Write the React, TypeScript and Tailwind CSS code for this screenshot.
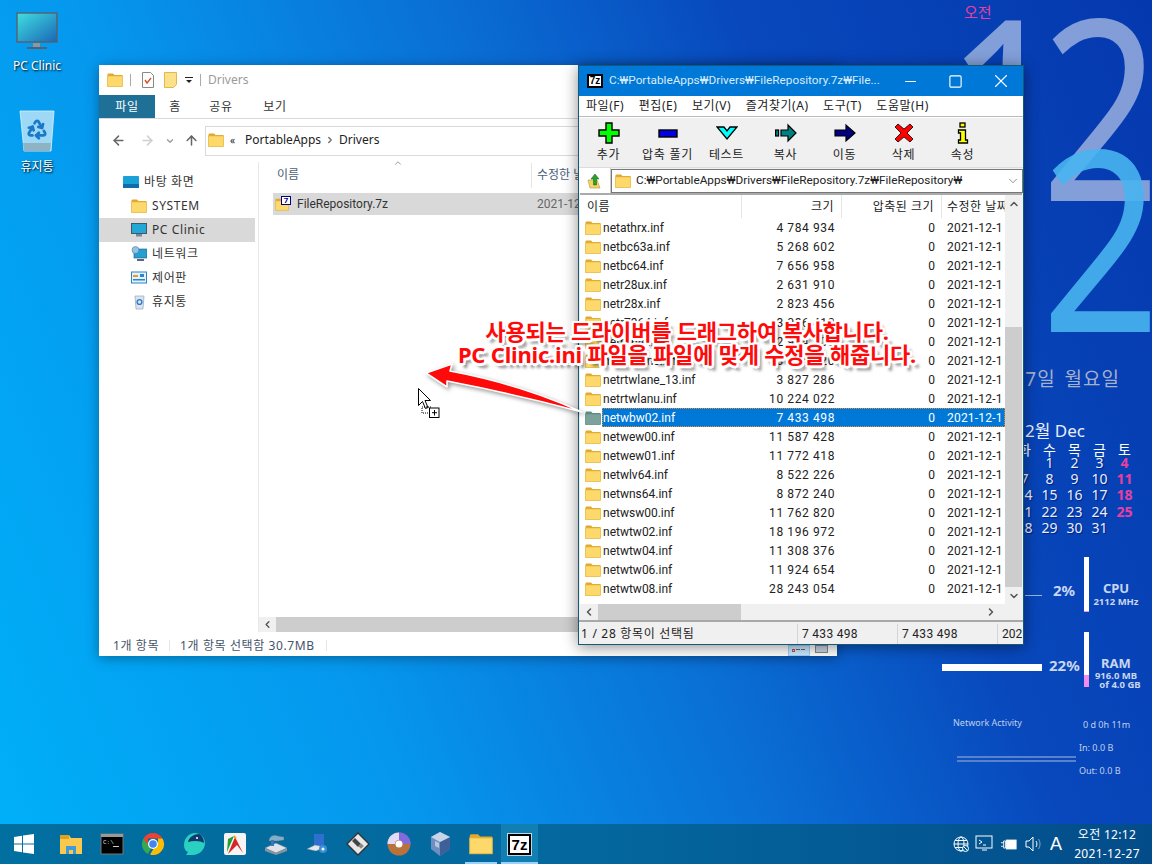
import React from "react";
import { ArrowLeft, ArrowRight, ArrowUp, ChevronDown, ChevronRight, ChevronLeft, ChevronUp, Minus, X, Square, Recycle } from "lucide-react";

const Folder = ({ className = "w-4 h-4", muted = false }: { className?: string; muted?: boolean }) => (
  <svg viewBox="0 0 16 14" className={className}>
    <path d="M0.5 1.5 Q0.5 .5 1.5 .5 H6 L7.5 2 H15.5 V13.5 H0.5Z" fill={muted ? "#5f8a86" : "#e0a82e"} />
    <rect x="0.5" y="3" width="15" height="10.5" fill={muted ? "#7da29c" : "#fdd96b"} stroke={muted ? "#5f8a86" : "#e6b63f"} strokeWidth=".6" />
  </svg>
);

const SevenZ = ({ className, text }: { className: string; text: string }) => (
  <div className={`flex items-center justify-center bg-white border-2 border-black font-['Liberation_Sans',sans-serif] font-bold text-black leading-none ${className} ${text}`}>7z</div>
);

const rows: [string, string][] = [
  ["netathrx.inf", "4 784 934"], ["netbc63a.inf", "5 268 602"], ["netbc64.inf", "7 656 958"], ["netr28ux.inf", "2 631 910"], ["netr28x.inf", "2 823 456"],
  ["netr7364.inf", "3 086 412"], ["netrtl64.inf", "2 964 108"], ["netrtwlane.inf", "3 614 720"], ["netrtwlane_13.inf", "3 827 286"], ["netrtwlanu.inf", "10 224 022"],
  ["netwbw02.inf", "7 433 498"], ["netwew00.inf", "11 587 428"], ["netwew01.inf", "11 772 418"], ["netwlv64.inf", "8 522 226"], ["netwns64.inf", "8 872 240"],
  ["netwsw00.inf", "11 762 820"], ["netwtw02.inf", "18 196 972"], ["netwtw04.inf", "11 308 376"], ["netwtw06.inf", "11 924 654"], ["netwtw08.inf", "28 243 054"],
];

const tools: { label: string; icon: React.ReactNode }[] = [
  { label: "추가", icon: <path d="M8 1h6v7h7v6h-7v7H8v-7H1V8h7z" fill="#00ff00" stroke="#000" strokeWidth="1.4" /> },
  { label: "압축 풀기", icon: <rect x="2" y="8" width="18" height="7" fill="#0000e0" stroke="#000" strokeWidth="1.4" /> },
  { label: "테스트", icon: <path d="M1 5h7l3 4 3-4h7L11 17z" fill="#00ffff" stroke="#000" strokeWidth="1.3" /> },
  { label: "복사", icon: <g stroke="#000" strokeWidth="1.2" fill="#008080"><rect x="0.6" y="8" width="3" height="6" /><path d="M6 8h7V3l8 8-8 8v-5H6z" /></g> },
  { label: "이동", icon: <path d="M1 8h11V3l9 8-9 8v-5H1z" fill="#000080" stroke="#000" strokeWidth="1.2" /> },
  { label: "삭제", icon: <path d="M5 2l6 5 6-5 3 3-6 6 6 6-3 3-6-5-6 5-3-3 6-6-6-6z" fill="#ff0000" stroke="#000" strokeWidth=".8" /> },
  { label: "속성", icon: <g fill="#ffff00" stroke="#000" strokeWidth="1.3"><rect x="8" y="1" width="5" height="4" /><path d="M6.5 8h7v10h2v3h-9v-3h2v-7h-2z" /></g> },
];

const days = ["일", "월", "화", "수", "목", "금", "토"];
const dates = ["", "", "", "1", "2", "3", "4", "5", "6", "7", "8", "9", "10", "11", "12", "13", "14", "15", "16", "17", "18", "19", "20", "21", "22", "23", "24", "25", "26", "27", "28", "29", "30", "31", ""];

const side: { label: string; active?: boolean; indent: string; icon: React.ReactNode }[] = [
  { label: "바탕 화면", indent: "pl-[24px]", icon: <svg viewBox="0 0 16 12" className="w-4 h-3"><rect width="16" height="12" rx="1" fill="#1aa2d8" /><rect y="8" width="16" height="4" fill="#0e6fa8" /></svg> },
  { label: "SYSTEM", indent: "pl-[32px]", icon: <Folder /> },
  { label: "PC Clinic", active: true, indent: "pl-[32px]", icon: <svg viewBox="0 0 16 14" className="w-4 h-4"><rect x=".5" y=".5" width="15" height="10" fill="#22a7d6" stroke="#456" /><rect x="5" y="11" width="6" height="2.5" fill="#789" /></svg> },
  { label: "네트워크", indent: "pl-[32px]", icon: <svg viewBox="0 0 16 16" className="w-4 h-4"><rect x="3" y="3" width="13" height="9" fill="#22a0d0" stroke="#357" strokeWidth=".6" /><rect x="6" y="13" width="7" height="2" fill="#568" /><circle cx="4.5" cy="4" r="3.5" fill="#8fc4e8" stroke="#468" strokeWidth=".5" /></svg> },
  { label: "제어판", indent: "pl-[32px]", icon: <svg viewBox="0 0 16 14" className="w-4 h-4"><rect x=".5" y="1" width="15" height="11" fill="#e4f1fb" stroke="#2a86c8" /><rect x="2" y="4" width="5" height="2" fill="#e79a2a" /><rect x="2" y="8" width="12" height="1.5" fill="#2a86c8" /><rect x="9" y="3" width="4" height="3" fill="#2a86c8" /></svg> },
  { label: "휴지통", indent: "pl-[32px]", icon: <svg viewBox="0 0 16 16" className="w-4 h-4"><path d="M4 2h9l-1 13H5z" fill="#dbe4ec" stroke="#8a99a8" strokeWidth=".6" /><circle cx="8.5" cy="8" r="2.4" fill="none" stroke="#2a7fd0" strokeWidth="1.4" /></svg> },
];

const mono = "font-['Roboto','Noto_Sans_CJK_KR',sans-serif]";

export default function App() {
  return (
    <div className="relative w-[1152px] h-[864px] overflow-hidden font-['Noto_Sans','Noto_Sans_CJK_KR',sans-serif] text-[12px] bg-[linear-gradient(68deg,#00b0f8_0%,#0598ee_28%,#0a70d6_52%,#0848bc_72%,#0538ae_100%)]">
      {/* desktop icons */}
      <div className="absolute left-[7px] top-[12px] w-[60px] flex flex-col items-center text-white [text-shadow:1px_1px_2px_#000]">
        <svg viewBox="0 0 42 38" className="w-[42px] h-[38px]">
          <defs><linearGradient id="mon" x1="0" y1="0" x2="1" y2="1"><stop offset="0" stopColor="#3fe0e0" /><stop offset="1" stopColor="#1a66b8" /></linearGradient></defs>
          <rect x="1" y="1" width="40" height="29" fill="url(#mon)" stroke="#55626e" strokeWidth="1.4" />
          <rect x="17" y="31" width="7" height="4" fill="#8a98a2" /><rect x="11" y="35" width="20" height="2" fill="#55626e" />
        </svg>
        <span className="mt-[7px] whitespace-nowrap leading-[18px]">PC Clinic</span>
      </div>
      <div className="absolute left-[7px] top-[109px] w-[60px] flex flex-col items-center text-white [text-shadow:1px_1px_2px_#000]">
        <div className="relative w-[36px] h-[44px]">
          <svg viewBox="0 0 36 44" className="w-[36px] h-[44px]">
            <path d="M1 2h34l-3 40H5z" fill="#b8e4f8" fillOpacity=".85" stroke="#d8f2fc" strokeWidth=".8" />
            <path d="M4 34h28l-1 8H5z" fill="#8fb2c4" />
          </svg>
          <Recycle className="absolute left-[7px] top-[9px] w-[22px] h-[22px] text-[#1a78c8]" strokeWidth={3} />
        </div>
        <span className="mt-[5px] leading-[18px]">휴지통</span>
      </div>

      {/* clock widget */}
      <div className="absolute left-[964px] top-[2px] text-[15px] leading-[20px] text-[#ec3ea2]">오전</div>
      <div className="absolute left-[945px] top-[-22px] text-[252px] leading-[252px] font-['Noto_Sans',sans-serif] text-white/50 origin-left scale-x-[.85]">1</div>
      <div className="absolute left-[1041px] top-[-22px] text-[252px] leading-[252px] font-['Noto_Sans',sans-serif] text-white/50 origin-left scale-x-[.83]">2</div>
      <div className="absolute left-[1041px] top-[109px] text-[252px] leading-[252px] font-['Noto_Sans',sans-serif] text-[#48b4f0]/90 origin-left scale-x-[.83]">2</div>
      <div className="absolute right-[32px] top-[366px] text-[19px] leading-[26px] tracking-[1px] [word-spacing:3px] text-[#a4b0cc] whitespace-nowrap">2021년 12월 27일 월요일</div>

      {/* calendar */}
      <div className="absolute left-[962px] top-[420px] w-[175px] text-[#e8eefa]">
        <div className="text-right pr-[52px] text-[17px] leading-[22px]">12월 Dec</div>
        <div className="grid grid-cols-7 text-center text-[14px] leading-[16.2px] mt-[3px]">
          {days.map((d) => <div key={d} className="text-[14px] leading-[10px] text-white">{d}</div>)}
          {dates.map((d, i) => (
            <div key={i} className={i % 7 === 6 || i % 7 === 0 ? "font-bold text-[#ea3fa0]" : "[text-shadow:1px_1px_1px_#002080]"}>{d}</div>
          ))}
        </div>
      </div>

      {/* system meters */}
      <div className="absolute left-[1025px] top-[595px] w-[17px] h-px bg-white/60" />
      <div className="absolute left-[1053px] top-[579px] text-[15px] leading-[22px] font-bold text-[#c8d6f0]">2%</div>
      <div className="absolute left-[1084px] top-[557px] w-[5px] h-[55px] bg-white flex flex-col justify-end"><div className="h-px bg-[#f48cf0]" /></div>
      <div className="absolute left-[1089px] top-[581px] w-[54px] text-center text-[#c8d6f0] font-bold">
        <div className="text-[13px] leading-[15px]">CPU</div>
        <div className="text-[9.5px] leading-[11px] whitespace-nowrap">2112 MHz</div>
      </div>
      <div className="absolute left-[942px] top-[664px] w-[100px] h-[7px] bg-white" />
      <div className="absolute left-[1049px] top-[654px] text-[15px] leading-[22px] font-bold text-[#c8d6f0]">22%</div>
      <div className="absolute left-[1084px] top-[632px] w-[5px] h-[55px] bg-white flex flex-col justify-end"><div className="h-[12px] bg-[#f48cf0]" /></div>
      <div className="absolute left-[1091px] top-[656px] text-[#c8d6f0] font-bold w-[50px] text-center">
        <div className="text-[13px] leading-[15px]">RAM</div>
        <div className="text-[9.5px] leading-[9px] whitespace-nowrap">916.0 MB</div>
        <div className="text-[9.5px] leading-[9px] whitespace-nowrap pl-[8px]">of 4.0 GB</div>
      </div>
      <div className="absolute left-[953px] top-[716px] text-[9px] leading-[14px] text-[#c0d0ee]">Network Activity</div>
      <div className="absolute left-[1083px] top-[718px] text-[9px] leading-[14px] text-[#c0d0ee]">0 d 0h 11m</div>
      <div className="absolute left-[1079px] top-[741px] text-[9px] leading-[14px] text-[#c0d0ee]">In: 0.0 B</div>
      <div className="absolute left-[1079px] top-[764px] text-[9px] leading-[14px] text-[#c0d0ee]">Out: 0.0 B</div>
      <div className="absolute left-[957px] top-[756px] w-[119px] h-[2px] bg-[#5a82cc]" />
      <div className="absolute left-[957px] top-[760px] w-[119px] h-[2px] bg-[#5a82cc]" />

      {/* explorer window */}
      <div className="absolute left-[99px] top-[65px] w-[738px] h-[591px] bg-white flex flex-col shadow-[0_2px_12px_rgba(0,0,0,.35)]">
        <div className="h-[30px] flex items-center pl-[8px] gap-[7px] text-[#9a9a9a]">
          <Folder />
          <div className="w-px h-[12px] bg-[#aaa]" />
          <svg viewBox="0 0 12 16" className="w-3 h-4 ml-[4px]"><path d="M.5.5h8l3 3v12H.5z" fill="#fff" stroke="#888" /><path d="M3 8l2 3 4-5" fill="none" stroke="#d8502a" strokeWidth="1.4" /></svg>
          <svg viewBox="0 0 13 16" className="w-[13px] h-4 ml-[3px]"><path d="M.5.5h12v12l-3 3H.5z" fill="#fde08a" stroke="#e2b84a" /></svg>
          <svg viewBox="0 0 8 8" className="w-2 h-2 ml-[1px]"><rect y="1" width="8" height="1" fill="#222" /><path d="M1 4h6L4 7z" fill="#222" /></svg>
          <div className="w-px h-[12px] bg-[#aaa]" />
          <span className="text-[12px]">Drivers</span>
        </div>
        <div className="h-[23px] flex items-stretch text-[12px] tracking-[.7px] text-[#333]">
          <div className="w-[56px] bg-[#1f7096] text-white flex items-center justify-center">파일</div>
          <div className="w-[40px] flex items-center justify-center">홈</div>
          <div className="w-[52px] flex items-center justify-center">공유</div>
          <div className="w-[56px] flex items-center justify-center">보기</div>
        </div>
        <div className="h-px bg-[#d9d9d9]" />
        <div className="h-[43px] flex items-center pl-[12px] text-[#666]">
          <ArrowLeft className="w-[15px] h-[15px]" strokeWidth={2.4} />
          <ArrowRight className="w-[15px] h-[15px] ml-[14px] text-[#cfcfcf]" strokeWidth={2.4} />
          <ChevronDown className="w-[10px] h-[10px] ml-[10px] text-[#999]" strokeWidth={3} />
          <ArrowUp className="w-[15px] h-[15px] ml-[9px]" strokeWidth={2.4} />
          <div className="ml-[6px] w-[500px] h-[30px] border border-[#d9d9d9] flex items-center pl-[2px] pb-[1px] text-[#222]">
            <Folder />
            <span className="ml-[6px] text-[10px]">«</span>
            <span className="ml-[10px]">PortableApps</span>
            <ChevronRight className="w-[10px] h-[10px] mx-[4px] text-[#666]" strokeWidth={3} />
            <span>Drivers</span>
          </div>
        </div>
        <div className="flex-1 flex min-h-0">
          <div className="w-[160px] border-r border-[#e8e8e8] pt-[8px] text-[#333] flex flex-col tracking-[.6px]">
            {side.map((s) => (
              <div key={s.label} className={`h-[24px] w-[156px] flex items-center gap-[5px] ${s.indent} ${s.active ? "bg-[#d9d9d9]" : ""}`}>
                {s.icon}<span>{s.label}</span>
              </div>
            ))}
          </div>
          <div className="flex-1 min-w-0 flex flex-col relative">
            <div className="h-[25px] flex items-center pl-[18px] pt-[1px] relative text-[#4c607a]">
              <span className="w-[254px]">이름</span>
              <div className="w-px h-[25px] bg-[#e5e5e5]" />
              <span className="ml-[5px]">수정한 날짜</span>
              <ChevronUp className="absolute left-[134px] top-[-4px] w-[10px] h-[10px] text-[#888]" strokeWidth={2} />
            </div>
            <div className={`mt-[6px] ml-[14px] h-[22px] bg-[#d9d9d9] flex items-center pl-[2px] text-[#333] ${mono} text-[12px]`}>
              <div className="relative w-[18px] h-[16px]">
                <Folder className="absolute left-0 top-[2px] w-[14px] h-[13px]" />
                <div className="absolute right-[2px] top-0 w-[10px] h-[9px] bg-white border border-[#000080] text-[8px] leading-[7px] text-center font-bold text-[#000080]">7</div>
              </div>
              <span className="ml-[4px] w-[240px]">FileRepository.7z</span>
              <span className="text-[#666]">2021-12-18</span>
            </div>
            <div className="flex-1" />
            <div className="h-[15px] bg-[#cdcdcd] flex">
              <div className="w-[17px] bg-[#f0f0f0] flex items-center justify-center"><ChevronLeft className="w-[11px] h-[11px] text-[#555]" strokeWidth={3} /></div>
            </div>
          </div>
        </div>
        <div className="h-[24px] flex items-center pt-[3px] text-[#44546a] tracking-[.6px]">
          <span className="ml-[14px]">1개 항목</span>
          <div className="w-px h-[11px] bg-[#e5e5e5] ml-[10px]" />
          <span className="ml-[10px]">1개 항목 선택함 30.7MB</span>
          <div className="w-px h-[11px] bg-[#e5e5e5] ml-[11px]" />
          <div className="ml-auto mr-[5px] flex self-end h-[11px]">
            <div className="w-[22px] bg-[#cce8ff] border border-[#99d1ff] flex items-start gap-px pt-[3px] pl-[3px]">
              <div className="w-[3px] h-[3px] border border-[#c05050]" /><div className="w-[4px] h-px bg-[#666]" /><div className="w-[4px] h-px bg-[#666]" />
            </div>
            <div className="w-[22px] bg-white flex justify-center"><div className="w-[13px] h-[8px] border border-[#888] bg-[#c8d4e4]" /></div>
          </div>
        </div>
      </div>

      {/* 7-zip window */}
      <div className="absolute left-[578px] top-[65px] w-[446px] h-[580px] flex flex-col bg-[#f0f0f0] border border-[#125a76] shadow-[0_2px_14px_rgba(0,0,0,.45)]">
        <div className="h-[30px] bg-[#0078d7] flex items-center text-white shrink-0">
          <SevenZ className="ml-[8px] w-[16px] h-[14px]" text="text-[10px]" />
          <span className={`ml-[6px] text-[11.8px] text-[#d8ebfb] whitespace-nowrap ${mono}`}>C:₩PortableApps₩Drivers₩FileRepository.7z₩File...</span>
          <div className="ml-auto flex items-center">
            <Minus className="w-[17px] h-[17px] mr-[29px]" strokeWidth={1.6} />
            <Square className="w-[15px] h-[15px] mr-[27px]" strokeWidth={1.8} />
            <X className="w-[22px] h-[22px] mr-[11px]" strokeWidth={1.2} />
          </div>
        </div>
        <div className="h-[20px] bg-white flex items-center gap-[14.5px] pl-[7px] text-[#222] tracking-[.55px] shrink-0">
          {["파일(F)", "편집(E)", "보기(V)", "즐겨찾기(A)", "도구(T)", "도움말(H)"].map((m) => <span key={m}>{m}</span>)}
        </div>
        <div className="h-[2px] bg-[#bbb] border-b border-white shrink-0" />
        <div className="h-[49px] flex shrink-0">
          {tools.map((t) => (
            <div key={t.label} className="w-[59px] flex flex-col items-center pt-[4px] text-[#222] tracking-[.7px]">
              <svg viewBox="0 0 22 22" className="w-[22px] h-[22px]">{t.icon}</svg>
              <span className="mt-[2px] leading-[18px] whitespace-nowrap">{t.label}</span>
            </div>
          ))}
        </div>
        <div className="h-[26px] flex items-center shrink-0 border-t border-[#ddd]">
          <div className="w-[32px] h-full bg-white border-r border-[#ccc] flex items-center justify-center">
            <svg viewBox="0 0 16 16" className="w-4 h-4"><path d="M1 7h9l3 8H3z" fill="#f4d668" stroke="#b89030" strokeWidth=".6" /><path d="M8 1l4 5H9.5v6h-3V6H4z" fill="#2aa02a" stroke="#136013" strokeWidth=".5" /></svg>
          </div>
          <div className="flex-1 h-[24px] bg-white border border-[#777] flex items-center pl-[3px] text-[#222]">
            <Folder />
            <span className={`ml-[5px] whitespace-nowrap text-[11.8px] ${mono}`}>C:₩PortableApps₩Drivers₩FileRepository.7z₩FileRepository₩</span>
            <ChevronDown className="ml-auto mr-[2px] w-[14px] h-[14px] text-[#666]" strokeWidth={1.2} />
          </div>
        </div>
        <div className="flex-1 min-h-0 flex flex-col mx-[1px] border-t-2 border-[#aaa]">
          <div className="flex-1 min-h-0 flex">
            <div className="w-[426px] bg-white flex flex-col overflow-hidden">
              <div className="h-[23px] flex items-center text-[#222] shrink-0 tracking-[.5px]">
                <span className="w-[161px] pl-[7px]">이름</span>
                <span className="w-[100px] text-right pr-[7px] border-l border-[#e5e5e5] leading-[23px]">크기</span>
                <span className="w-[100px] text-right pr-[7px] border-l border-[#e5e5e5] leading-[23px]">압축된 크기</span>
                <span className="flex-1 pl-[5px] border-l border-[#e5e5e5] leading-[23px] whitespace-nowrap overflow-hidden">수정한 날짜</span>
              </div>
              {rows.map(([n, s]) => {
                const sel = n === "netwbw02.inf";
                return (
                  <div key={n} className={`h-[19px] flex items-center text-[#222] shrink-0 ${mono}`}>
                    <div className="w-[22px] pl-[5px] shrink-0"><Folder muted={sel} /></div>
                    <div className={`flex-1 h-full flex items-center ${sel ? "bg-[#0078d7] text-white outline-1 outline-dotted outline-offset-[-1px] outline-[#f08a2a]" : ""}`}>
                      <span className="w-[140px] pl-[1px] whitespace-nowrap">{n}</span>
                      <span className="w-[93px] text-right tracking-[.6px]">{s}</span>
                      <span className="w-[100px] text-right">0</span>
                      <span className="pl-[12px] whitespace-nowrap tracking-[.2px]">2021-12-1</span>
                    </div>
                  </div>
                );
              })}
            </div>
            <div className="w-[17px] flex flex-col bg-[#f0f0f0] ml-auto">
              <div className="h-[17px] flex items-center justify-center"><ChevronUp className="w-[12px] h-[12px] text-[#555]" strokeWidth={3} /></div>
              <div className="h-[115px]" />
              <div className="h-[260px] bg-[#cdcdcd]" />
              <div className="flex-1" />
              <div className="h-[17px] flex items-center justify-center"><ChevronDown className="w-[12px] h-[12px] text-[#555]" strokeWidth={3} /></div>
            </div>
          </div>
          <div className="h-[16px] flex items-center shrink-0">
            <div className="w-[18px] flex justify-center"><ChevronLeft className="w-[12px] h-[12px] text-[#555]" strokeWidth={3} /></div>
            <div className="w-[143px] h-full bg-[#cdcdcd]" />
            <div className="flex-1" />
            <div className="w-[50px] flex justify-center pr-[12px]"><ChevronRight className="w-[12px] h-[12px] text-[#555]" strokeWidth={3} /></div>
          </div>
        </div>
        <div className="h-[24px] border-t-2 border-[#a8a8a8] flex items-center pt-[1px] text-[#222] shrink-0 overflow-hidden">
          <span className="w-[219px] shrink-0 pl-[2px] border-r border-[#d5d5d5] leading-[20px] tracking-[.7px]">1 / 28 항목이 선택됨</span>
          <span className={`w-[100px] shrink-0 pl-[4px] border-r border-[#d5d5d5] leading-[20px] tracking-[.3px] ${mono}`}>7 433 498</span>
          <span className={`w-[100px] shrink-0 pl-[4px] border-r border-[#d5d5d5] leading-[20px] tracking-[.3px] ${mono}`}>7 433 498</span>
          <span className={`pl-[4px] whitespace-nowrap ${mono}`}>2021-12-18</span>
        </div>
      </div>

      {/* annotation */}
      <div className="absolute left-[400px] top-[320px] w-[574px] text-center text-[22px] leading-[23px] text-[#ff0a0a] font-bold tracking-[-.2px] whitespace-nowrap [text-shadow:2.5px_0_#fff,-2.5px_0_#fff,0_2.5px_#fff,0_-2.5px_#fff,2px_2px_#fff,-2px_-2px_#fff,2px_-2px_#fff,-2px_2px_#fff,4px_5px_3px_#0007]">
        <div>사용되는 드라이버를 드래그하여 복사합니다.</div>
        <div>PC Clinic.ini 파일을 파일에 맞게 수정을 해줍니다.</div>
      </div>
      <svg className="absolute left-[420px] top-[355px] w-[170px] h-[70px] drop-shadow-[2px_2px_2px_#0006]" viewBox="420 355 170 70">
        <path d="M426 373 L452 364 L450 371 Q520 384 582 412 Q515 394 447 381 L447 387Z" fill="#ff0a0a" stroke="#fff" strokeWidth="1.6" strokeLinejoin="round" />
      </svg>
      <svg className="absolute left-[417px] top-[387px] w-[24px] h-[32px]" viewBox="0 0 24 32">
        <path d="M1.5 1.5v17l4-4 3 7 2.500-1-3-7h5.500z" fill="#fff" stroke="#000" />
        <rect x="5" y="20" width="9" height="6" fill="none" stroke="#000" strokeDasharray="1 1" />
        <rect x="12.5" y="21" width="9.5" height="9.5" fill="#fff" stroke="#000" /><path d="M15 25.700h5M17.500 23v5.500" stroke="#000" />
      </svg>

      {/* taskbar */}
      <div className="absolute left-0 bottom-0 w-full h-[40px] flex items-stretch text-white bg-[linear-gradient(90deg,#016f9f_0%,#04689f_50%,#034c8a_100%)]">
        <div className="w-[48px] flex items-center justify-center">
          <svg viewBox="0 0 20 20" className="w-[20px] h-[20px]" fill="#fff"><path d="M0 3l8-1.200V9.500H0zM9 1.600L20 0v9.500H9zM0 10.500h8v7.700L0 17zM9 10.500h11V20L9 18.400z" /></svg>
        </div>
        <div className="w-[2px]" />
        {[
          <svg viewBox="0 0 24 24"><path d="M1 3h9l2 3h11v16H1z" fill="#f8c94e" /><rect x="1" y="3" width="9" height="4" fill="#e0a21e" /><path d="M7 22v-8h10v8h-3v-4h-4v4z" fill="#3f9bd8" /></svg>,
          <svg viewBox="0 0 24 24"><rect x="1" y="2" width="22" height="20" fill="#000" stroke="#777" /><rect x="1" y="2" width="22" height="3" fill="#999" /><text x="3" y="12" fill="#ddd" fontSize="6" fontFamily="Liberation Mono">C:\</text><rect x="13" y="14" width="6" height="1" fill="#ccc" /></svg>,
          <svg viewBox="0 0 24 24"><path d="M12 1a11 11 0 0 1 9.500 5.500H12z" fill="#ea4335" /><path d="M2.500 6.500A11 11 0 0 0 7 22l4-7z" fill="#34a853" /><path d="M2.500 6.500A11 11 0 0 1 12 1v5.500H7L6.800 13z" fill="#ea4335" /><path d="M21.500 6.500A11 11 0 0 1 9 22.600L13 16l4-3V6.500z" fill="#fbbc05" /><circle cx="12" cy="12" r="5" fill="#fff" /><circle cx="12" cy="12" r="3.800" fill="#4285f4" /></svg>,
          <svg viewBox="0 0 24 24"><path d="M2 13C2 6 7 1 13 1c5 0 10 4 10 10 0 7-6 12-12 12H4l2-3C3 19 2 16 2 13z" fill="#2ad0c0" /><path d="M6 10C7 5 12 2 17 2c3 1 5 5 5 9-3-2-10-3-16-1z" fill="#123a70" /><circle cx="15" cy="6" r="1" fill="#fff" /></svg>,
          <svg viewBox="0 0 24 24"><rect x="1" y="1" width="22" height="22" rx="2" fill="#f4f4f4" /><path d="M5 22L12 5l8 16-6-8z" fill="#d8252a" /><path d="M4 20L11 4 5 7z" fill="#1f9e3a" /><path d="M11 3l3 3-3 1z" fill="#f0a020" /></svg>,
          <svg viewBox="0 0 24 24"><path d="M1 16l11-5 11 5-11 5z" fill="#dde3e8" stroke="#778" strokeWidth=".5" /><path d="M1 16v3l11 4 11-4v-3l-11 5z" fill="#8a949c" /><path d="M5 9c0-5 5-7 9-5l6 1v3l-6 1z" fill="#7fb0c8" stroke="#567" strokeWidth=".4" /><rect x="7" y="8" width="3" height="6" fill="#3878b8" /></svg>,
          <svg viewBox="0 0 24 24"><rect x="9" y="2" width="10" height="14" fill="#2f6fd0" /><path d="M2 17l8-4 10 2-9 4z" fill="#e4e8ec" stroke="#789" strokeWidth=".5" /><circle cx="18" cy="17" r="4" fill="#3a8fd8" /><circle cx="18" cy="17" r="1.500" fill="#fff" /></svg>,
          <svg viewBox="0 0 24 24"><path d="M12 1l11 11-11 11L1 12z" fill="#e8e8e8" stroke="#333" strokeWidth="1.400" /><path d="M9 6l6 6-3 3-6-6z" fill="#444" /><rect x="13" y="12" width="4" height="4" transform="rotate(45 15 14)" fill="#888" /></svg>,
          <svg viewBox="0 0 24 24"><circle cx="12" cy="12" r="11.500" fill="#b9733a" /><path d="M12 .5A11.500 11.500 0 0 1 23.500 12H16a4 4 0 0 0-4-4z" fill="#7f6ae0" /><path d="M.5 12A11.500 11.500 0 0 1 12 .5V8a4 4 0 0 0-4 4z" fill="#e0dcf8" /><circle cx="12" cy="12" r="3.500" fill="#fff" /></svg>,
          <svg viewBox="0 0 24 24"><path d="M12 0l10 5v12l-10 7-9-7V5z" fill="#6f8fc0" /><path d="M12 10l10-5v12l-10 7z" fill="#3f5f98" /><path d="M12 0l10 5-10 5L3 5z" fill="#c8d4e8" /><path d="M7 9l4 2v5l-4-2z" fill="#fff" fillOpacity=".5" /></svg>,
        ].map((ic, i) => (
          <div key={i} className="w-[41px] flex items-center justify-center [&>svg]:w-[24px] [&>svg]:h-[24px]">{ic}</div>
        ))}
        <div className="w-[41px] flex items-end justify-center relative">
          <div className="absolute inset-0 flex items-center justify-center"><Folder className="w-[24px] h-[22px]" /></div>
          <div className="w-[32px] h-[2px] bg-[#99d1ff] relative" />
        </div>
        <div className="w-[37px] bg-[#127fb3] flex flex-col items-center justify-end relative">
          <div className="absolute inset-0 flex items-center justify-center"><SevenZ className="w-[23px] h-[21px] ring-1 ring-white/70" text="text-[15px]" /></div>
          <div className="w-full h-[2px] bg-[#99d1ff] relative" />
        </div>
        <div className="ml-auto flex items-center">
          <svg viewBox="0 0 16 16" className="w-[16px] h-[16px]" fill="none" stroke="#fff" strokeWidth="1"><circle cx="8" cy="8" r="7" /><ellipse cx="8" cy="8" rx="3" ry="7" /><path d="M1 8h14M2 4.500h12M2 11.500h12" /><circle cx="12.500" cy="12.500" r="3" fill="#035f96" /><path d="M10.500 10.500l4 4" /></svg>
          <svg viewBox="0 0 18 18" className="w-[18px] h-[18px] ml-[6px]" fill="none" stroke="#fff"><rect x="1" y="1" width="16" height="12" /><path d="M4 5l3 2-3 2M8 10h3M7 15h5" /></svg>
          <svg viewBox="0 0 18 14" className="w-[16px] h-[13px] ml-[8px]" fill="none" stroke="#fff"><path d="M0 5h3M0 9h3M3 3h2v8H3z" /><rect x="6" y="2" width="11" height="10" fill="#fff" /></svg>
          <svg viewBox="0 0 18 16" className="w-[18px] h-[16px] ml-[8px]" fill="none" stroke="#fff"><path d="M1 5h3l4-4v14l-4-4H1z" /><path d="M11 5c1.200 1.500 1.200 4.500 0 6" /><path d="M13.500 3c2 3 2 7 0 10" strokeOpacity=".5" /></svg>
          <span className="ml-[7px] text-[18px] leading-none font-['Liberation_Sans',sans-serif]">A</span>
          <div className="ml-[5px] mr-[5px] w-[80px] text-center text-[12px] tracking-[.3px] leading-[19px] whitespace-nowrap">
            <div>오전 12:12</div>
            <div>2021-12-27</div>
          </div>
        </div>
      </div>
    </div>
  );
}
